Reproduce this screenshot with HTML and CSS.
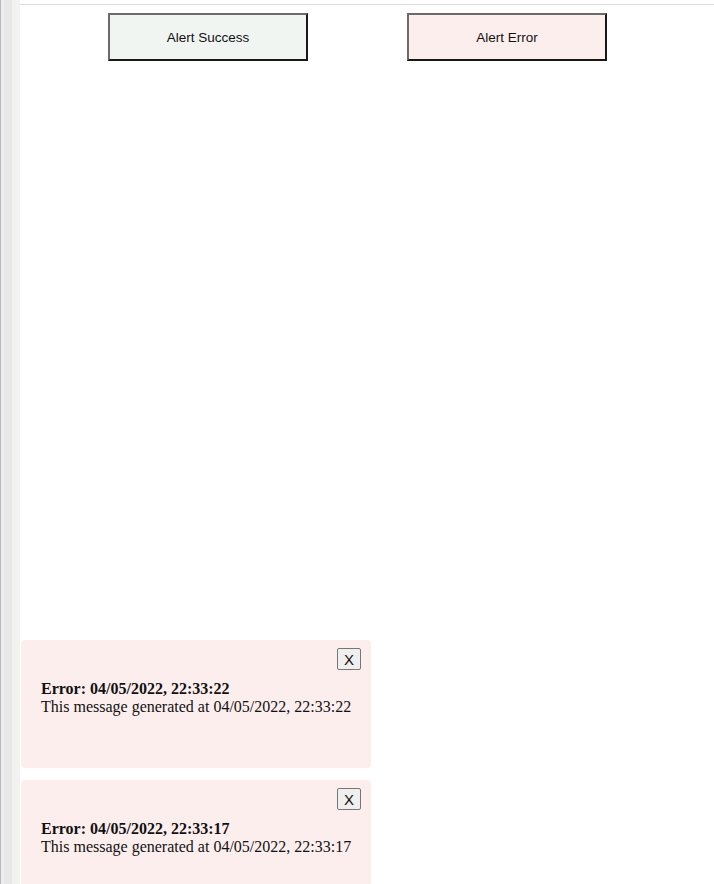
FILE: index.html
```html
<!DOCTYPE html>
<html>
<head>
<meta charset="utf-8">
<link rel="stylesheet" href="styles.css">
</head>
<body>
<div class="page">
  <div class="sidebar"></div>
  <main class="main">
    <div class="actions">
      <button class="btn btn-success">Alert Success</button>
      <button class="btn btn-error">Alert Error</button>
    </div>
  </main>
</div>
<div class="toasts">
  <div class="toast">
    <div class="toast-head"><button class="close">X</button></div>
    <div class="toast-body">
      <strong>Error: 04/05/2022, 22:33:22</strong><br>
      This message generated at 04/05/2022, 22:33:22
    </div>
  </div>
  <div class="toast">
    <div class="toast-head"><button class="close">X</button></div>
    <div class="toast-body">
      <strong>Error: 04/05/2022, 22:33:17</strong><br>
      This message generated at 04/05/2022, 22:33:17
    </div>
  </div>
</div>
</body>
</html>
```
FILE: styles.css
```css
html, body {
  margin: 0;
  padding: 0;
  background: #fff;
  height: 100%;
  overflow: hidden;
}
.page {
  display: flex;
  height: 884px;
}
.sidebar {
  width: 20px;
  flex: none;
  background: linear-gradient(to right, #b8b8b8 0, #b8b8b8 1px, #ececec 1px, #ececec 4px, #e8e8e8 4px, #e8e8e8 12px, #f2f2f0 12px, #f2f2f0 20px);
}
.main {
  flex: 1;
  margin-top: 4px;
  border-top: 1px solid #dcdcdc;
}
.actions {
  display: flex;
  gap: 99px;
  padding: 8px 0 0 88px;
}
.btn {
  box-sizing: border-box;
  width: 200px;
  height: 48px;
  font-family: "Liberation Sans", Arial, sans-serif;
  font-size: 13.5px;
  color: #111;
  border: 2px solid;
  border-color: #6e6a6a #1a1717 #1a1717 #6e6a6a;
  border-radius: 0;
  padding: 0;
}
.btn-success { background: #f0f5f1; }
.btn-error { background: #fdeeee; }
.toasts {
  position: absolute;
  left: 21px;
  top: 640px;
  display: flex;
  flex-direction: column;
  gap: 12px;
  width: 350px;
}
.toast {
  box-sizing: border-box;
  height: 128px;
  background: #fdeeee;
  border-radius: 4px;
  padding: 8px 10px 0 20px;
}
.toast-head {
  display: flex;
  justify-content: flex-end;
}
.close {
  box-sizing: border-box;
  width: 24px;
  height: 22px;
  padding: 0;
  font-family: "Liberation Sans", Arial, sans-serif;
  font-size: 15px;
  color: #111;
  background: #efefef;
  border: 1px solid #767676;
  border-radius: 2px;
}
.toast-body {
  margin-top: 10px;
  font-family: "Liberation Serif", "Times New Roman", serif;
  font-size: 16px;
  line-height: 18px;
  color: #111;
}
```
